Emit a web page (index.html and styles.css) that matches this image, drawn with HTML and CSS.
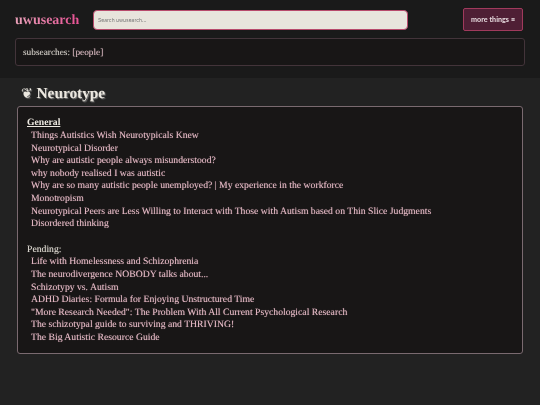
FILE: index.html
```html
<!doctype html>
<html lang="en">
<head>
    <meta charset="UTF-8">
    <title>uwusearch</title>
    <link rel="stylesheet" href="styles.css">
</head>
<body>
    <div class="header">
        <div class="top-row">
            <a class="logo">uwusearch</a>
            <input class="search" type="text" placeholder="Search uwusearch...">
            <button class="more">more things ≡</button>
        </div>
        <div class="subsearches">subsearches: <a>[people]</a></div>
    </div>
    <div class="main">
        <h1 class="title"><span class="flower">❦</span> Neurotype</h1>
        <div class="content">
            <div class="group-name"><u>General</u></div>
            <ul class="links">
                <li>Things Autistics Wish Neurotypicals Knew</li>
                <li>Neurotypical Disorder</li>
                <li>Why are autistic people always misunderstood?</li>
                <li>why nobody realised I was autistic</li>
                <li>Why are so many autistic people unemployed? | My experience in the workforce</li>
                <li>Monotropism</li>
                <li>Neurotypical Peers are Less Willing to Interact with Those with Autism based on Thin Slice Judgments</li>
                <li>Disordered thinking</li>
            </ul>
            <div class="pending">Pending:</div>
            <ul class="links">
                <li>Life with Homelessness and Schizophrenia</li>
                <li>The neurodivergence NOBODY talks about...</li>
                <li>Schizotypy vs. Autism</li>
                <li>ADHD Diaries: Formula for Enjoying Unstructured Time</li>
                <li>"More Research Needed": The Problem With All Current Psychological Research</li>
                <li>The schizotypal guide to surviving and THRIVING!</li>
                <li>The Big Autistic Resource Guide</li>
            </ul>
        </div>
    </div>
</body>
</html>
```

FILE: styles.css
```css
* {
    margin: 0;
    padding: 0;
    box-sizing: border-box;
}

body {
    background-color: #222222;
    color: #e8e4dc;
    font-family: "Liberation Serif", serif;
    font-size: 9.7px;
    line-height: 12.6px;
    text-rendering: geometricPrecision;
    will-change: transform;
}

.header {
    height: 78px;
    padding: 8px 15px 0;
    background-color: #1a1a1a;
}

.top-row {
    display: flex;
    align-items: center;
    height: 23px;
}

.logo {
    width: 78px;
    padding-top: 4px;
    font-size: 14px;
    font-weight: bold;
    background: linear-gradient(90deg, #e8a0b8, #e8408c);
    -webkit-background-clip: text;
    background-clip: text;
    color: transparent;
}

.search {
    width: 315px;
    height: 20px;
    padding: 0 4px;
    background-color: #e8e4dc;
    border: 1px solid #b84a6c;
    border-radius: 4px;
    font-family: "Inter", sans-serif;
    font-size: 5px;
    outline: none;
}

.search::placeholder {
    color: #777777;
}

.more {
    width: 60px;
    height: 23px;
    margin-left: auto;
    margin-right: 2px;
    background-color: #4f1f35;
    border: 1px solid #a03a5c;
    border-radius: 2px;
    color: #e8dce0;
    font-family: "Lato", sans-serif;
    font-size: 7.2px;
    font-weight: bold;
}

.subsearches {
    height: 28px;
    margin-top: 7px;
    padding-left: 7px;
    background-color: #181616;
    border: 1px solid #43343a;
    border-radius: 3px;
    line-height: 28px;
    font-size: 9.3px;
    color: #d4cfc8;
    text-shadow: 0 0 1px rgba(212, 207, 200, 0.4);
}

.subsearches a {
    color: #dcb8c2;
}

.main {
    height: 327px;
    padding: 0 17px;
}

.title {
    height: 28px;
    padding-left: 4px;
    font-size: 15.3px;
    line-height: 31px;
    text-shadow: 1px 1px 1px #777777;
    color: #ece8e0;
}

.flower {
    font-family: "DejaVu Sans", sans-serif;
    font-size: 14px;
}

.content {
    height: 248px;
    padding: 10px 9px 0;
    background-color: #181616;
    border: 1px solid #7a6a70;
    border-radius: 3px;
}

.group-name {
    height: 13px;
    font-weight: bold;
    color: #ece8e0;
}

.links {
    list-style: none;
    padding-left: 4px;
    color: #e6bac6;
    text-shadow: 0 0 1px rgba(230, 186, 198, 0.5);
}

.pending {
    margin-top: 13px;
    color: #e0dcd4;
    text-shadow: 0 0 1px rgba(224, 220, 212, 0.4);
}
```
